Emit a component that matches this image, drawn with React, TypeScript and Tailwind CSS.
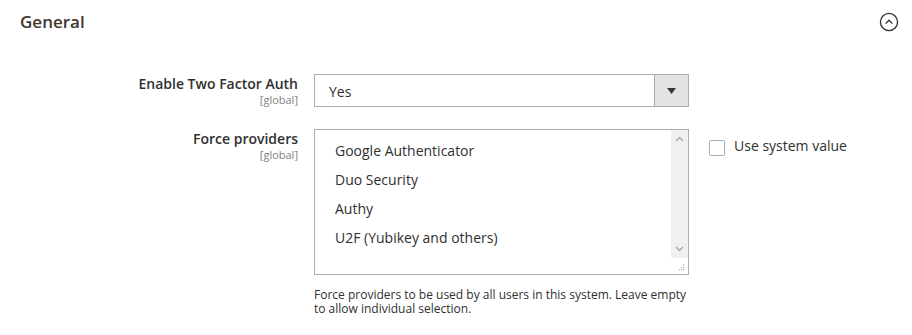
import React from "react";

const font = { fontFamily: '"Open Sans", "Noto Sans", Arial, sans-serif' };

function Chevron({ dir }: { dir: "up" | "down" }) {
  return (
    <svg width="9" height="6" viewBox="0 0 9 6" className="block">
      <path
        d={dir === "up" ? "M1 5 L4.5 1.5 L8 5" : "M1 1 L4.5 4.5 L8 1"}
        fill="none"
        stroke="#a6a6a6"
        strokeWidth="1.4"
      />
    </svg>
  );
}

export default function App() {
  const options = [
    "Google Authenticator",
    "Duo Security",
    "Authy",
    "U2F (Yubikey and others)",
  ];
  return (
    <div className="w-[912px] h-[335px] bg-white text-[#303030] overflow-hidden" style={font}>
      {/* Header */}
      <div className="h-[44px] flex items-center justify-between pl-[20px] pr-[13px]">
        <div className="text-[17px] font-semibold text-[#41362f] leading-[22px]">General</div>
        <svg width="20" height="20" viewBox="0 0 20 20" className="block">
          <circle cx="10" cy="10" r="8.6" fill="none" stroke="#303030" strokeWidth="1.3" />
          <path d="M6.6 11.6 L10 8.2 L13.4 11.6" fill="none" stroke="#303030" strokeWidth="1.3" />
        </svg>
      </div>

      <div className="mt-[30px] flex flex-col gap-[22px]">
        {/* Row 1 */}
        <div className="flex">
          <div className="w-[298px] text-right">
            <div className="text-[14px] font-semibold leading-[19px]">Enable Two Factor Auth</div>
            <div className="text-[11px] leading-[13px] text-[#808080]">[global]</div>
          </div>
          <div className="ml-[16px] w-[375px] h-[33px] border border-[#adadad] flex bg-white">
            <div className="flex-1 pl-[14px] pt-[7px] text-[14px] leading-[19px]">Yes</div>
            <div className="w-[34px] border-l border-[#adadad] bg-[#e3e3e3] flex items-center justify-center">
              <svg width="9" height="6" viewBox="0 0 9 6" className="block">
                <path d="M0 0 H9 L4.5 6 Z" fill="#41362f" />
              </svg>
            </div>
          </div>
        </div>

        {/* Row 2 */}
        <div className="flex">
          <div className="w-[298px] text-right">
            <div className="text-[14px] font-semibold leading-[19px]">Force providers</div>
            <div className="text-[11px] leading-[13px] text-[#808080]">[global]</div>
          </div>
          <div className="ml-[16px] w-[375px]">
            <div className="h-[146px] border border-[#adadad] flex bg-white">
              <div className="flex-1 pt-[6px] pl-[20px]">
                {options.map((o) => (
                  <div key={o} className="h-[29px] text-[14px] leading-[29px] text-[#303030]">
                    {o}
                  </div>
                ))}
              </div>
              <div className="w-[17px] flex flex-col">
                <div className="h-[128px] bg-[#f0f0f0] flex flex-col items-center justify-between pt-[6px] pb-[6px]">
                  <Chevron dir="up" />
                  <Chevron dir="down" />
                </div>
                <div className="flex-1 flex items-end justify-end pr-[3px] pb-[3px]">
                  <svg width="7" height="7" viewBox="0 0 7 7" className="block">
                    <rect x="5" y="0" width="1.2" height="1.2" fill="#b5b5b5" />
                    <rect x="3" y="3" width="1.2" height="1.2" fill="#b5b5b5" />
                    <rect x="5" y="3" width="1.2" height="1.2" fill="#b5b5b5" />
                    <rect x="1" y="5" width="1.2" height="1.2" fill="#b5b5b5" />
                    <rect x="3" y="5" width="1.2" height="1.2" fill="#b5b5b5" />
                    <rect x="5" y="5" width="1.2" height="1.2" fill="#b5b5b5" />
                  </svg>
                </div>
              </div>
            </div>
            <div className="mt-[13px] text-[12px] leading-[14px] text-[#303030]">
              Force providers to be used by all users in this system. Leave empty to allow individual selection.
            </div>
          </div>
          <div className="ml-[20px] pt-[7px] flex items-start">
            <div className="mt-[4px] w-[16px] h-[16px] border border-[#adadad] rounded-[2px] bg-white" />
            <div className="ml-[9px] text-[14px] leading-[19px] text-[#303030]">Use system value</div>
          </div>
        </div>
      </div>
    </div>
  );
}
